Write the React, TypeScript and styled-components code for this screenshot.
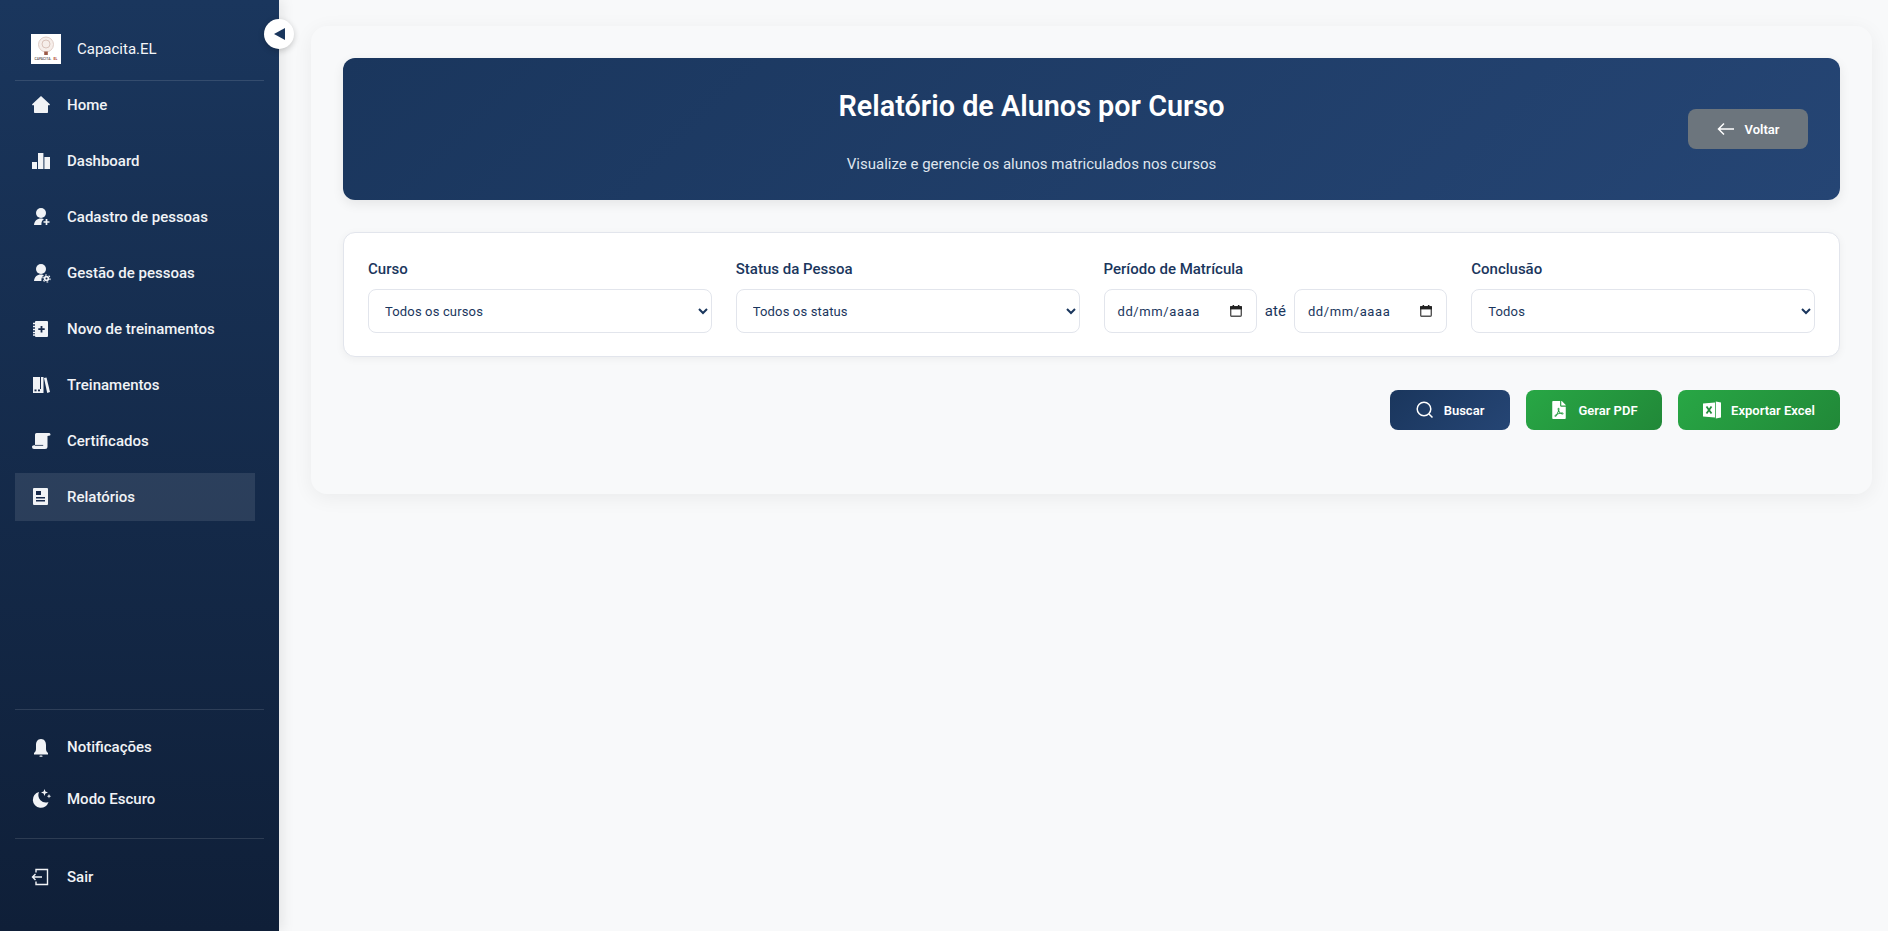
import React from "react";
import styled, { createGlobalStyle } from "styled-components";
import { FaFilePdf } from "react-icons/fa";

const GlobalStyle = createGlobalStyle`
  * { box-sizing: border-box; }
  html, body { margin: 0; height: 100%; }
  body { font-family: Roboto, "Noto Sans", sans-serif; background: #f8f9fa; color: #1a365d; }
  #root { height: 100%; }
`;

const cut = "#17294a";

const Icon = ({ children }: { children: React.ReactNode }) => (
  <svg width="20" height="20" viewBox="0 0 20 20" fill="currentColor" style={{ overflow: "visible" }}>
    {children}
  </svg>
);

const PersonBase = () => (
  <>
    <circle cx="10" cy="6" r="5" />
    <path d="M3 18c.2-3.8 3-6.5 7-6.5 1.2 0 2.4.2 3 .8-1.6.8-2.6 2.6-2.6 4.7 0 .4 0 .7.1 1z" />
  </>
);

const HomeIcon = () => (
  <Icon>
    <path d="M10 1l8.6 8c.6.6.3 1.3-.5 1.3H17V17c0 .6-.4 1-1 1H4c-.6 0-1-.4-1-1v-6.7H1.900c-.8 0-1.100-.7-.5-1.300z" />
  </Icon>
);

const BarsIcon = () => (
  <Icon>
    <rect x="1" y="11" width="5" height="7" />
    <rect x="7" y="2" width="5.400" height="16" />
    <rect x="13.400" y="6" width="5.600" height="12" />
  </Icon>
);

const PersonAddIcon = () => (
  <Icon>
    <PersonBase />
    <path d="M15.500 12v6M12.500 15h6" stroke="currentColor" strokeWidth="1.700" />
  </Icon>
);

const PersonGearIcon = () => (
  <Icon>
    <PersonBase />
    <circle cx="15.500" cy="15.500" r="2.800" />
    <circle cx="15.500" cy="15.500" r="3.600" fill="none" stroke="currentColor" strokeWidth="1.200" strokeDasharray="1.600 2.170" />
    <circle cx="15.500" cy="15.500" r="1" fill={cut} />
  </Icon>
);

const NotebookIcon = () => (
  <Icon>
    <rect x="4" y="2" width="13" height="16" rx="1" />
    <path d="M2 4.500h3M2 7.500h3M2 10.500h3M2 13.500h3M2 16h3" stroke="currentColor" strokeWidth="1.300" />
    <path d="M10.500 7v6.400M7.300 10.200h6.400" stroke={cut} strokeWidth="1.800" />
  </Icon>
);

const BooksIcon = () => (
  <Icon>
    <path d="M2 2h10.500v16H2z" />
    <path d="M9.500 2v12" stroke={cut} strokeWidth="1" />
    <rect x="3.500" y="14.500" width="2" height="1.800" fill={cut} />
    <rect x="7" y="14.500" width="2" height="1.800" fill={cut} />
    <path d="M13 3l2.500-.5L19 17l-2.800 1z" />
  </Icon>
);

const ScrollIcon = () => (
  <Icon>
    <path d="M5.500 2H18a1.500 1.500 0 0 1 1 2.600l-2.500.4V15.500A2.500 2.500 0 0 1 14 18H3A2 2 0 0 1 1 16c0-1 .8-1.700 2-1.700h1V3.500A1.500 1.500 0 0 1 5.500 2z" />
    <path d="M4 14.400h8.200" stroke={cut} strokeWidth=".8" />
  </Icon>
);

const ReportIcon = () => (
  <Icon>
    <rect x="2" y="1" width="15" height="17" rx="1" />
    <rect x="5" y="4" width="5" height="4" fill={cut} />
    <rect x="5" y="10" width="9" height="1.500" fill={cut} />
    <rect x="5" y="13" width="9" height="1.500" fill={cut} />
  </Icon>
);

const BellIcon = () => (
  <Icon>
    <path d="M10 2C6.500 2 5 5 5 8v4c0 2-1 3-2 4v1.500h14V16c-1-1-2-2-2-4V8c0-3-1.500-6-5-6z" />
    <rect x="8.500" y="18.500" width="3" height="1.300" rx=".6" />
  </Icon>
);

const MoonIcon = () => (
  <Icon>
    <path d="M8 3a8 8 0 1 0 9.500 10A7.500 7.500 0 0 1 8 3z" />
    <path d="M13.500 0l.9 2.600 2.600.9-2.600.9-.9 2.600-.9-2.600L10 3.500l2.600-.9z" />
    <path d="M18 5l.6 1.600 1.600.6-1.600.6L18 9.400l-.6-1.600-1.600-.6 1.600-.6z" />
  </Icon>
);

const ExitIcon = () => (
  <Icon>
    <path d="M5 5.500V2.500h11.500v15H5V14.500M1.500 10H11M4.500 7l-3 3 3 3" fill="none" stroke="currentColor" strokeWidth="1.400" />
  </Icon>
);

const BackArrow = () => (
  <svg width="18" height="14" viewBox="0 0 18 14" fill="none" stroke="currentColor" strokeWidth="1.500">
    <path d="M17 7H1.500M7 1.500L1.500 7 7 12.500" />
  </svg>
);

const SearchIcon = () => (
  <svg width="18" height="18" viewBox="0 0 18 18" fill="none" stroke="currentColor" strokeWidth="1.500">
    <circle cx="8" cy="8" r="6.800" />
    <path d="M13 13l3.500 3.500" />
  </svg>
);

const ExcelIcon = () => (
  <svg width="18" height="18" viewBox="0 0 18 18">
    <path d="M0 2.500L12 1.500v15L0 15.500z" fill="#fff" />
    <path d="M12.800 .5L18 1.500v15l-5.200 1z" fill="#fff" />
    <path d="M3.500 5.500l5 7M8.500 5.500l-5 7" stroke="#248f3d" strokeWidth="1.800" fill="none" />
  </svg>
);

const CalendarIcon = () => (
  <svg width="12" height="12" viewBox="0 0 12 12" fill="none">
    <rect x=".7" y="1.700" width="10.600" height="9.600" rx="1" fill="#fff" stroke="#555" strokeWidth="1.400" />
    <rect x="0" y="1.200" width="12" height="3.200" fill="#222" />
    <rect x="2.600" y="0" width="1.500" height="2" fill="#222" />
    <rect x="7.900" y="0" width="1.500" height="2" fill="#222" />
  </svg>
);

const Logo = () => (
  <LogoBox>
    <svg width="30" height="30" viewBox="0 0 30 30">
      <rect width="30" height="30" fill="#fff" />
      <circle cx="15" cy="10.500" r="7.500" fill="#f6eeea" stroke="#d8c3bb" strokeWidth="0.800" />
      <circle cx="15" cy="10" r="4" fill="none" stroke="#cdb0a6" strokeWidth="0.700" />
      <rect x="13.200" y="17.500" width="3.600" height="3.500" fill="#9c5a48" />
      <text x="3.500" y="26" fontSize="3.400" fontFamily="Roboto, sans-serif" fontWeight="500" fill="#5a5050">CAPACITA.</text>
      <text x="22.500" y="26" fontSize="3.400" fontFamily="Roboto, sans-serif" fontWeight="700" fill="#b23a2c">EL</text>
    </svg>
  </LogoBox>
);

const mainItems = [
  { label: "Home", icon: <HomeIcon /> },
  { label: "Dashboard", icon: <BarsIcon /> },
  { label: "Cadastro de pessoas", icon: <PersonAddIcon /> },
  { label: "Gestão de pessoas", icon: <PersonGearIcon /> },
  { label: "Novo de treinamentos", icon: <NotebookIcon /> },
  { label: "Treinamentos", icon: <BooksIcon /> },
  { label: "Certificados", icon: <ScrollIcon /> },
  { label: "Relatórios", icon: <ReportIcon />, active: true },
];

const App = () => {
  return (
    <Layout>
      <GlobalStyle />
      <Sidebar>
        <Toggle>
          <svg width="11" height="12" viewBox="0 0 11 12"><path d="M0 6l11-6v12z" fill="currentColor" /></svg>
        </Toggle>
        <Brand>
          <Logo />
          <BrandName>Capacita.EL</BrandName>
        </Brand>
        <Nav>
          {mainItems.map((item) => (
            <NavItem key={item.label} $active={item.active}>
              <NavIcon>{item.icon}</NavIcon>
              {item.label}
            </NavItem>
          ))}
        </Nav>
        <BottomGroup>
          <SmallItem><NavIcon><BellIcon /></NavIcon>Notificações</SmallItem>
          <SmallItem><NavIcon><MoonIcon /></NavIcon>Modo Escuro</SmallItem>
        </BottomGroup>
        <ExitGroup>
          <SmallItem><NavIcon><ExitIcon /></NavIcon>Sair</SmallItem>
        </ExitGroup>
      </Sidebar>
      <Main>
        <Card>
          <Header>
            <HeaderText>
              <Title>Relatório de Alunos por Curso</Title>
              <Subtitle>Visualize e gerencie os alunos matriculados nos cursos</Subtitle>
            </HeaderText>
            <BackButton><BackArrow />Voltar</BackButton>
          </Header>
          <Filters>
            <Field>
              <Label>Curso</Label>
              <Select><option>Todos os cursos</option></Select>
            </Field>
            <Field>
              <Label>Status da Pessoa</Label>
              <Select><option>Todos os status</option></Select>
            </Field>
            <Field>
              <Label>Período de Matrícula</Label>
              <DateRow>
                <DateField>dd/mm/aaaa<CalendarIcon /></DateField>
                <DateSep>até</DateSep>
                <DateField>dd/mm/aaaa<CalendarIcon /></DateField>
              </DateRow>
            </Field>
            <Field>
              <Label>Conclusão</Label>
              <Select><option>Todos</option></Select>
            </Field>
          </Filters>
          <Actions>
            <ActionButton $variant="blue" $width={120}><SearchIcon />Buscar</ActionButton>
            <ActionButton $variant="green" $width={136}><FaFilePdf />Gerar PDF</ActionButton>
            <ActionButton $variant="green" $width={162}><ExcelIcon />Exportar Excel</ActionButton>
          </Actions>
        </Card>
      </Main>
    </Layout>
  );
};

const Layout = styled.div`
  display: flex;
  height: 931px;
  overflow: hidden;
`;

const Sidebar = styled.aside`
  position: relative;
  flex: 0 0 279px;
  display: flex;
  flex-direction: column;
  padding: 0 15px;
  background: linear-gradient(180deg, #1a365d 0%, #0f1f38 100%);
  box-shadow: 4px 0 12px rgba(0, 0, 0, 0.08);
  color: #fff;
`;

const Toggle = styled.button`
  position: absolute;
  top: 19px;
  right: -15px;
  width: 30px;
  height: 30px;
  padding: 0;
  border: 0;
  border-radius: 50%;
  background: #fff;
  color: #1a365d;
  display: flex;
  align-items: center;
  justify-content: center;
  box-shadow: 0 2px 6px rgba(0, 0, 0, 0.2);
`;

const Brand = styled.div`
  height: 81px;
  display: flex;
  align-items: center;
  gap: 16px;
  padding: 17px 16px 0;
  border-bottom: 1px solid rgba(255, 255, 255, 0.12);
`;

const LogoBox = styled.div`
  width: 30px;
  height: 30px;
  flex: none;
  line-height: 0;
`;

const BrandName = styled.span`
  font-size: 15px;
  color: #f4f6f9;
`;

const Nav = styled.nav`
  display: flex;
  flex-direction: column;
  gap: 8px;
`;

const NavItem = styled.a<{ $active?: boolean }>`
  height: 48px;
  display: flex;
  align-items: center;
  padding: 0 16px;
  gap: 16px;
  margin-right: ${(p) => (p.$active ? "9px" : "0")};
  font-size: 15px;
  font-weight: 500;
  color: #f1f3f6;
  background: ${(p) => (p.$active ? "rgba(255, 255, 255, 0.1)" : "transparent")};
`;

const SmallItem = styled(NavItem)`
  height: 52px;
`;

const NavIcon = styled.span`
  flex: none;
  width: 20px;
  display: flex;
  justify-content: center;
`;

const BottomGroup = styled.div`
  margin-top: auto;
  border-top: 1px solid rgba(255, 255, 255, 0.12);
  padding: 11px 0 13px;
`;

const ExitGroup = styled.div`
  border-top: 1px solid rgba(255, 255, 255, 0.12);
  padding: 12px 0 28px;
`;

const Main = styled.main`
  flex: 1;
  min-width: 0;
  padding: 26px 16px 0 32px;
`;

const Card = styled.section`
  background: #f8f9fa;
  border-radius: 16px;
  padding: 32px;
  height: 468px;
  box-shadow: 0 4px 20px rgba(0, 0, 0, 0.06);
`;

const Header = styled.header`
  height: 142px;
  border-radius: 12px;
  background: linear-gradient(135deg, #1a365d 0%, #254574 100%);
  color: #fff;
  box-shadow: 0 4px 12px rgba(0, 0, 0, 0.08);
  display: flex;
  align-items: center;
  padding: 0 32px;
`;

const HeaderText = styled.div`
  flex: 1;
  text-align: center;
  padding-top: 3px;
`;

const Title = styled.h1`
  margin: 0 0 32px;
  font-size: 28.8px;
  line-height: 34px;
  font-weight: 600;
`;

const Subtitle = styled.p`
  margin: 0;
  font-size: 15px;
  line-height: 18px;
  color: #dfe5ee;
`;

const BackButton = styled.button`
  width: 120px;
  height: 40px;
  border: 0;
  border-radius: 8px;
  background: #6c757d;
  color: #fff;
  font: 600 13px Roboto, sans-serif;
  display: flex;
  align-items: center;
  justify-content: center;
  gap: 10px;
`;

const Filters = styled.div`
  margin-top: 32px;
  height: 125px;
  padding: 27px 24px 0;
  background: #fff;
  border: 1px solid #e2e5ec;
  border-radius: 12px;
  box-shadow: 0 2px 8px rgba(0, 0, 0, 0.05);
  display: grid;
  grid-template-columns: repeat(4, 1fr);
  gap: 24px;
`;

const Field = styled.div`
  min-width: 0;
  display: flex;
  flex-direction: column;
`;

const Label = styled.label`
  font-size: 15px;
  line-height: 18px;
  font-weight: 500;
  margin-bottom: 11px;
  color: #1a365d;
`;

const Select = styled.select`
  width: 100%;
  height: 44px;
  padding: 0 12px;
  border: 1px solid #e2e5ec;
  border-radius: 8px;
  background: #fff;
  color: #1a365d;
  font: 400 13px Roboto, sans-serif;
  letter-spacing: 0.15px;
`;

const DateRow = styled.div`
  display: flex;
  align-items: center;
  gap: 8px;
`;

const DateField = styled.div`
  flex: 1;
  height: 44px;
  padding: 0 14px 0 13px;
  border: 1px solid #e2e5ec;
  border-radius: 8px;
  background: #fff;
  display: flex;
  align-items: center;
  justify-content: space-between;
  font-size: 13px;
  letter-spacing: 0.6px;
  color: #1a365d;
`;

const DateSep = styled.span`
  font-size: 15px;
  color: #1a365d;
`;

const Actions = styled.div`
  margin-top: 33px;
  display: flex;
  justify-content: flex-end;
  gap: 16px;
`;

const ActionButton = styled.button<{ $variant: "blue" | "green"; $width: number }>`
  width: ${(p) => p.$width}px;
  height: 40px;
  border: 0;
  border-radius: 8px;
  color: #fff;
  font: 600 13px Roboto, sans-serif;
  display: flex;
  align-items: center;
  justify-content: center;
  gap: 10px;
  background: ${(p) =>
    p.$variant === "blue"
      ? "linear-gradient(135deg, #1a365d 0%, #254574 100%)"
      : "linear-gradient(135deg, #28a745 0%, #218838 100%)"};
  > svg { font-size: 18px; flex: none; }
`;

export default App;
